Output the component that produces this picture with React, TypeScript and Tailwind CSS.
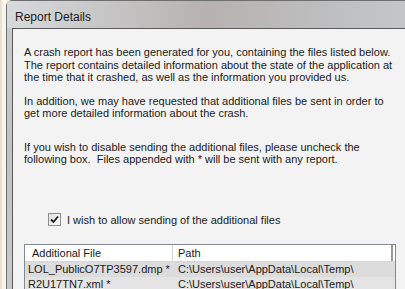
export default function App() {
  return (
    <div className="w-[405px] h-[289px] overflow-hidden flex bg-[#f6f2e6] font-['Liberation_Sans',Arial,sans-serif] text-[11px] text-[#1a1a1a]">
      {/* left page strip */}
      <div className="w-[6px] shrink-0 border-l-[2px] border-[#e8e2d2] bg-[#f8f5ea]" />

      {/* window */}
      <div className="flex-1 flex flex-col">
        <div className="h-[6px] bg-gradient-to-r from-[#f2efe6] via-[#8a8a8a] to-[#6e6a66]" />
        <div className="flex-1 flex flex-col rounded-tl-[6px] border-l border-t border-[#6f6f6f] bg-gradient-to-b from-[#c9cdd1] via-[#bfc3c6] to-[#c6cacd]">
          {/* title bar */}
          <div className="h-[27px] shrink-0 flex items-center pt-[5px] pl-[8px] text-[12px] text-[#202020] bg-gradient-to-r from-[#d7dadd] via-[#b7b2b0] to-[#c2c6c9]">
            Report Details
          </div>

          {/* client area */}
          <div className="flex-1 ml-[5px] border-l border-t border-[#5a5a5a] bg-[#f3f3f3] pl-[11px] pr-[8px] pt-[17px]">
            <p className="leading-[12.5px]">
              A crash report has been generated for you, containing the files listed below.
              The report contains detailed information about the state of the application at
              the time that it crashed, as well as the information you provided us.
            </p>
            <p className="leading-[12.5px] mt-[11px]">
              In addition, we may have requested that additional files be sent in order to
              get more detailed information about the crash.
            </p>
            <p className="leading-[12.5px] mt-[21px]">
              If you wish to disable sending the additional files, please uncheck the
              following box.&nbsp; Files appended with * will be sent with any report.
            </p>

            <div className="mt-[46px] ml-[24px] flex items-center gap-[6px]">
              <div className="w-[13px] h-[13px] border border-[#8e8f8f] bg-gradient-to-br from-[#e0e0e0] to-[#fafafa] flex items-center justify-center">
                <svg width="9" height="9" viewBox="0 0 9 9">
                  <path d="M1 4.5 L3.5 7 L8 1.5" fill="none" stroke="#1c1c1c" strokeWidth="1.8" />
                </svg>
              </div>
              <span>I wish to allow sending of the additional files</span>
            </div>

            {/* file list */}
            <div className="mt-[16px] mr-[1px] border border-[#828790] bg-[#fafafa]">
              <div className="flex h-[17px] border-b border-[#d5d5d5] bg-white">
                <div className="w-[148px] pl-[7px] flex items-center border-r border-[#d5d5d5]">Additional File</div>
                <div className="flex-1 pl-[5px] flex items-center">Path</div>
                <div className="w-[4px] border-l-[2px] border-[#9a9a9a]" />
              </div>
              <div className="flex h-[15px] bg-[#dcdcdc] items-center">
                <div className="w-[148px] pl-[3px]">LOL_PublicO7TP3597.dmp *</div>
                <div className="flex-1 pl-[5px]">C:\Users\user\AppData\Local\Temp\</div>
              </div>
              <div className="flex h-[15px] bg-[#e4e4e4] items-center">
                <div className="w-[148px] pl-[3px]">R2U17TN7.xml *</div>
                <div className="flex-1 pl-[5px]">C:\Users\user\AppData\Local\Temp\</div>
              </div>
            </div>
          </div>
        </div>
      </div>
    </div>
  );
}
